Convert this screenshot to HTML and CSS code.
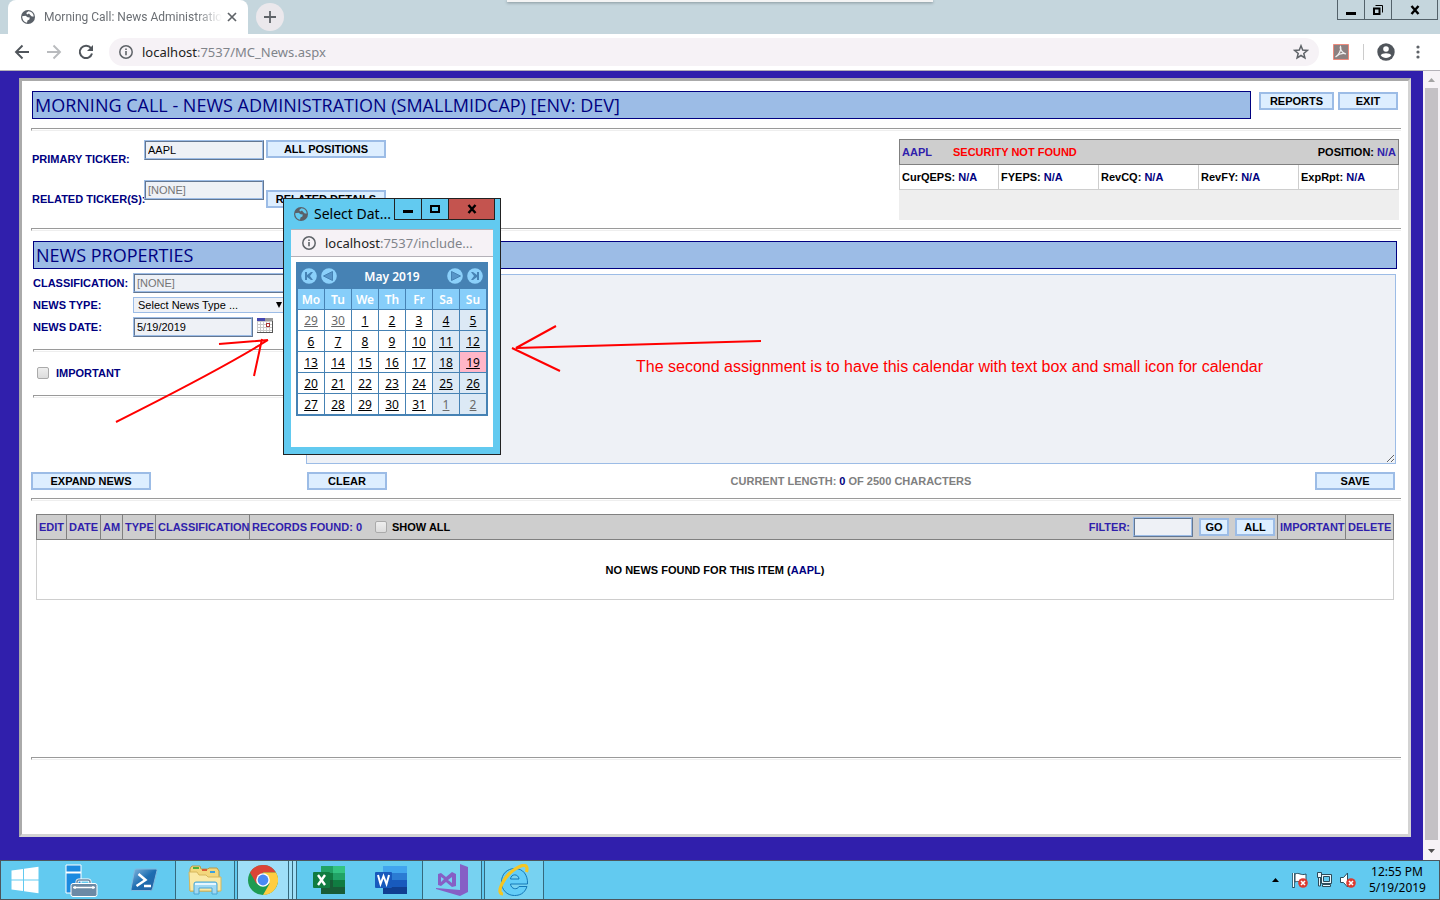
FILE: index.html
```html
<!DOCTYPE html>
<html lang="en">
<head>
<meta charset="utf-8">
<title>Morning Call: News Administration</title>
<link rel="stylesheet" href="styles.css">
</head>
<body>
<svg class="defs" aria-hidden="true">
  <symbol id="globe" viewBox="0 0 14 14"><circle cx="7" cy="7" r="7" fill="#5a6068"/><path d="M1.2 6.3 4.6 5.8 6.6 7.2 8.8 7.6 8.4 9.6 6.5 10.4 6 12.8A6 6 0 0 1 1.2 6.3ZM7.4 1.2 5.2 3 6.2 4.4 8 3.6 9.2 5 10.8 6.4 12.8 6.6A6 6 0 0 0 7.4 1.2Z" fill="currentColor"/></symbol>
  <symbol id="info" viewBox="0 0 14 14"><circle cx="7" cy="7" r="6.2" fill="none" stroke="#5f6368" stroke-width="1.5"/><path d="M7 6v4.2M7 3.6v1.5" stroke="#5f6368" stroke-width="1.6"/></symbol>
  <symbol id="denied" viewBox="0 0 10 10"><circle cx="5" cy="5" r="4.8" fill="#dc3a30"/><path d="M3 3l4 4M7 3L3 7" stroke="#fff" stroke-width="1.6"/></symbol>
</svg>

<header class="tabstrip">
  <div class="tab">
    <svg class="tab-icon" width="14" height="14"><use href="#globe"/></svg>
    <span class="tab-title">Morning Call: News Administratio</span>
    <button class="plain" aria-label="Close tab"><svg width="10" height="10" viewBox="0 0 10 10"><path d="M1 1l8 8M9 1L1 9" stroke="#5f6368" stroke-width="1.7"/></svg></button>
  </div>
  <button class="new-tab" aria-label="New tab"><svg width="12" height="12" viewBox="0 0 12 12"><path d="M6 0v12M0 6h12" stroke="#5f6368" stroke-width="1.8"/></svg></button>
  <div class="top-sliver"></div>
  <div class="window-buttons">
    <button aria-label="Minimize"><svg width="10" height="10" viewBox="0 0 10 10"><path d="M0 7h10v3H0z"/></svg></button>
    <button aria-label="Restore"><svg width="10" height="10" viewBox="0 0 10 10"><path d="M1 3.5h5.500v5.500H1z" fill="none" stroke="#000" stroke-width="2"/><path d="M2.500.5h7v7" fill="none" stroke="#000"/></svg></button>
    <button class="wide" aria-label="Close"><svg width="10" height="10" viewBox="0 0 10 10"><path d="M1.500 1l7 8M8.500 1l-7 8" stroke="#000" stroke-width="2.400"/></svg></button>
  </div>
</header>

<nav class="toolbar">
  <button class="plain" aria-label="Back"><svg width="16" height="16" viewBox="0 0 16 16" fill="none" stroke="#50555b" stroke-width="1.9"><path d="M15 8H2M8.500 1.500L2 8l6.500 6.500"/></svg></button>
  <button class="plain" aria-label="Forward"><svg width="16" height="16" viewBox="0 0 16 16" fill="none" stroke="#b9bbbe" stroke-width="1.9"><path d="M1 8h13M7.500 1.500L14 8l-6.500 6.500"/></svg></button>
  <button class="plain" aria-label="Reload"><svg width="16" height="16" viewBox="0 0 16 16"><path d="M13 4.200A6.200 6.200 0 1 0 14 9.500" fill="none" stroke="#50555b" stroke-width="2"/><path d="M15 1v6H9z" fill="#50555b"/></svg></button>
  <div class="address">
    <svg width="14" height="14"><use href="#info"/></svg>
    <span class="url"><b>localhost</b>:7537/MC_News.aspx</span>
    <svg class="star" width="16" height="16" viewBox="0 0 16 16"><path d="M8 1.800l1.700 4.300 4.600.3-3.500 3 1.100 4.500L8 11.500l-3.900 2.400 1.100-4.500-3.500-3 4.600-.3z" fill="none" stroke="#5f6368" stroke-width="1.500"/></svg>
  </div>
  <svg width="16" height="16" viewBox="0 0 16 16"><path d="M.5.5h15v15H.5z" fill="#8c8080" stroke="#ec8a7c"/><path d="M2.500 13C5 11.500 9 6 7.500 2.500 6.500 4 9 9.500 13 10c-2.500-1-7 0-10.500 3" fill="none" stroke="#eee" stroke-width="1.200"/></svg>
  <span class="tool-divider"></span>
  <svg class="avatar" width="18" height="18" viewBox="0 0 18 18"><circle cx="9" cy="9" r="8.700" fill="#50555b"/><circle cx="9" cy="6" r="2.800" fill="#fff"/><path d="M3.700 12.300c1-2.800 9.600-2.800 10.600 0-2.500 3.500-8.100 3.500-10.600 0z" fill="#fff"/></svg>
  <svg class="more" width="4" height="14" viewBox="0 0 4 14" fill="#5f6368"><circle cx="2" cy="2" r="1.600"/><circle cx="2" cy="7" r="1.600"/><circle cx="2" cy="12" r="1.600"/></svg>
</nav>

<div class="viewport">
  <main class="panel">
    <div class="title-row">
      <h1 class="banner">MORNING CALL - NEWS ADMINISTRATION (SMALLMIDCAP) [ENV: DEV]</h1>
      <button class="btn reports">REPORTS</button>
      <button class="btn exit">EXIT</button>
    </div>
    <hr>
    <section class="ticker-row">
      <div class="ticker-form">
        <label for="primary">PRIMARY TICKER:</label>
        <input id="primary" class="field" type="text" value="AAPL">
        <button class="btn">ALL POSITIONS</button>
        <label for="related">RELATED TICKER(S):</label>
        <input id="related" class="field" type="text" placeholder="[NONE]">
        <button class="btn lowered">RELATED DETAILS</button>
      </div>
      <div class="security">
        <div class="security-head"><span class="ink">AAPL</span><span class="error">SECURITY NOT FOUND</span><span class="position">POSITION: <span class="ink">N/A</span></span></div>
        <table class="security-data"><tr>
          <td>CurQEPS: <span class="navy">N/A</span></td><td>FYEPS: <span class="navy">N/A</span></td><td>RevCQ: <span class="navy">N/A</span></td><td>RevFY: <span class="navy">N/A</span></td><td>ExpRpt: <span class="navy">N/A</span></td>
        </tr></table>
      </div>
    </section>
    <hr>
    <section class="news">
      <h2 class="banner">NEWS PROPERTIES</h2>
      <div class="editor">
        <div class="properties">
          <div class="prop-grid">
            <label for="class">CLASSIFICATION:</label>
            <input id="class" class="field full" type="text" placeholder="[NONE]">
            <label for="type">NEWS TYPE:</label>
            <span class="select-wrap"><select id="type"><option>Select News Type ...</option></select></span>
            <label for="date">NEWS DATE:</label>
            <span class="date-field">
              <input id="date" class="field" type="text" value="5/19/2019">
              <button class="plain" aria-label="Choose date"><svg width="16" height="15" viewBox="0 0 16 15" shape-rendering="crispEdges"><path d="M0 0h16v15H0z" fill="#c9c9c9"/><path d="M0 0h8v3H0z" fill="#4446b0"/><path d="M8 0h8v3H8z" fill="#999"/><path d="M1 4h2v2H1zM4 4h2v2H4zM7 4h2v2H7zM10 4h2v2h-2zM13 4h2v2h-2zM1 7h2v2H1zM4 7h2v2H4zM7 7h2v2H7zM13 7h2v2h-2zM1 10h2v2H1zM4 10h2v2H4zM7 10h2v2H7zM10 10h2v2h-2zM13 10h2v2h-2zM1 13h2v1H1zM4 13h2v1H4zM7 13h2v1H7zM10 13h2v1h-2zM13 13h2v1h-2z" fill="#fff"/><path d="M9.500 5.500h3v3h-3z" fill="#fff" stroke="#a33"/><path d="M15 3h1v12H0v-1h15z" fill="#555"/></svg></button>
            </span>
          </div>
          <hr>
          <label class="important"><input type="checkbox">IMPORTANT</label>
          <hr>
        </div>
        <textarea aria-label="News text"></textarea>
      </div>
      <div class="actions">
        <button class="btn">EXPAND NEWS</button>
        <button class="btn short">CLEAR</button>
        <p class="counter">CURRENT LENGTH: <span class="navy">0</span> OF 2500 CHARACTERS</p>
        <button class="btn short">SAVE</button>
      </div>
    </section>
    <hr>
    <section class="records">
      <table class="records-table">
        <colgroup><col class="c-edit"><col class="c-date"><col class="c-am"><col class="c-type"><col class="c-class"><col><col class="c-important"><col class="c-delete"></colgroup>
        <thead><tr>
          <th>EDIT</th><th>DATE</th><th>AM</th><th>TYPE</th><th>CLASSIFICATION</th>
          <th><div class="record-tools"><span>RECORDS FOUND: 0</span><label class="show-all"><input type="checkbox">SHOW ALL</label><label class="filter" for="filter">FILTER:</label><input id="filter" class="field" type="text"><button class="btn go">GO</button><button class="btn all">ALL</button></div></th>
          <th>IMPORTANT</th><th>DELETE</th>
        </tr></thead>
        <tbody><tr><td colspan="8">NO NEWS FOUND FOR THIS ITEM (<span class="navy">AAPL</span>)</td></tr></tbody>
      </table>
    </section>
    <hr>
  </main>
  <div class="scrollbar">
    <svg width="7" height="4" viewBox="0 0 7 4"><path d="M0 4L3.500 0 7 4z" fill="#a3a3a3"/></svg>
    <div class="thumb"></div>
    <svg width="7" height="4" viewBox="0 0 7 4"><path d="M0 0l3.500 4L7 0z" fill="#505050"/></svg>
  </div>
</div>

<aside class="popup">
  <div class="popup-title">
    <svg class="popup-icon" width="14" height="14"><use href="#globe"/></svg>
    <span class="popup-name">Select Dat...</span>
    <div class="window-buttons">
      <button aria-label="Minimize popup"><svg width="10" height="10" viewBox="0 0 10 10"><path d="M0 6h10v3H0z"/></svg></button>
      <button aria-label="Maximize popup"><svg width="10" height="10" viewBox="0 0 10 10"><path d="M1 2h8v6H1z" fill="none" stroke="#000" stroke-width="2"/></svg></button>
      <button class="wide close" aria-label="Close popup"><svg width="10" height="10" viewBox="0 0 10 10"><path d="M1.500 1l7 8M8.500 1l-7 8" stroke="#000" stroke-width="2.400"/></svg></button>
    </div>
  </div>
  <div class="popup-body">
    <div class="popup-url"><svg width="14" height="14"><use href="#info"/></svg><span class="url"><b>localhost</b>:7537/include...</span></div>
    <div class="calendar">
      <div class="cal-head">
        <button class="plain" aria-label="Previous year"><svg width="16" height="16" viewBox="0 0 16 16"><circle cx="8" cy="8" r="7.800" fill="#8bd0fa"/><path d="M4 4h2v3l4-3h2l-3 4 3 4h-2L6 9v3H4z" fill="#4682b4"/></svg></button>
        <button class="plain" aria-label="Previous month"><svg width="16" height="16" viewBox="0 0 16 16"><circle cx="8" cy="8" r="7.800" fill="#8bd0fa"/><path d="M11.500 3.500v9L2.500 8z" fill="#5795c8" stroke="#4682b4"/></svg></button>
        <strong>May 2019</strong>
        <button class="plain" aria-label="Next month"><svg width="16" height="16" viewBox="0 0 16 16"><circle cx="8" cy="8" r="7.800" fill="#8bd0fa"/><path d="M4.500 3.500v9l9-4.500z" fill="#5795c8" stroke="#4682b4"/></svg></button>
        <button class="plain" aria-label="Next year"><svg width="16" height="16" viewBox="0 0 16 16"><circle cx="8" cy="8" r="7.800" fill="#8bd0fa"/><path d="M12 4h-2v3L6 4H4l3 4-3 4h2l4-3v3h2z" fill="#4682b4"/></svg></button>
      </div>
      <table>
        <thead><tr><th>Mo</th><th>Tu</th><th>We</th><th>Th</th><th>Fr</th><th>Sa</th><th>Su</th></tr></thead>
        <tbody>
          <tr><td class="other"><a href="#">29</a></td><td class="other"><a href="#">30</a></td><td><a href="#">1</a></td><td><a href="#">2</a></td><td><a href="#">3</a></td><td><a href="#">4</a></td><td><a href="#">5</a></td></tr>
          <tr><td><a href="#">6</a></td><td><a href="#">7</a></td><td><a href="#">8</a></td><td><a href="#">9</a></td><td><a href="#">10</a></td><td><a href="#">11</a></td><td><a href="#">12</a></td></tr>
          <tr><td><a href="#">13</a></td><td><a href="#">14</a></td><td><a href="#">15</a></td><td><a href="#">16</a></td><td><a href="#">17</a></td><td><a href="#">18</a></td><td class="today"><a href="#">19</a></td></tr>
          <tr><td><a href="#">20</a></td><td><a href="#">21</a></td><td><a href="#">22</a></td><td><a href="#">23</a></td><td><a href="#">24</a></td><td><a href="#">25</a></td><td><a href="#">26</a></td></tr>
          <tr><td><a href="#">27</a></td><td><a href="#">28</a></td><td><a href="#">29</a></td><td><a href="#">30</a></td><td><a href="#">31</a></td><td class="other"><a href="#">1</a></td><td class="other"><a href="#">2</a></td></tr>
        </tbody>
      </table>
    </div>
  </div>
</aside>

<svg class="arrows" width="770" height="430" viewBox="0 0 770 430" fill="none" stroke="#f00" stroke-width="2"><path d="M116 422C165 397 220 370 268 340M219 344L268 340M262 339L254 376M761 341L516 348L556 326M512 348L560 371"/></svg>
<p class="note">The second assignment is to have this calendar with text box and small icon for calendar</p>

<footer class="taskbar">
  <button class="task start" aria-label="Start"><svg width="28" height="28" viewBox="0 0 28 28" fill="#fff"><path d="M.5 4.500L12 3v10.500H.5zM13 2.800L27.500.8v12.700H13zM.5 14.500H12V25L.5 23.500zM13 14.500h14.500v12.700L13 25.200z"/></svg></button>
  <button class="task manager" aria-label="Server Manager"><svg width="33" height="33" viewBox="0 0 33 33"><path d="M1 1h15v28H1z" fill="#1b8ae0" stroke="#fff"/><path d="M1 8.500h15" stroke="#fff" stroke-width="2"/><path d="M12 20v-2q0-2 2-2h9q2 0 2 2v2" fill="none" stroke="#fff" stroke-width="3"/><path d="M12 20v-2q0-2 2-2h9q2 0 2 2v2" fill="none" stroke="#6c8aa5" stroke-width="1.500"/><rect x="6" y="19.500" width="26" height="13" rx="2" fill="#6c8aa5" stroke="#fff"/><path d="M8 23.500h22M10 22v3M28 22v3" stroke="#fff" stroke-width="1.300"/></svg></button>
  <button class="task" aria-label="PowerShell"><svg width="28" height="24" viewBox="0 0 28 24"><defs><linearGradient id="ps" x2="1" y2="1"><stop stop-color="#87b9df"/><stop offset=".5" stop-color="#1c6db1"/><stop offset="1" stop-color="#2a62a0"/></linearGradient></defs><path d="M6 1h20q1.500 0 1 1.500L22.500 21q-.5 1.500-2 1.500H2q-1.500 0-1-1.500L4.500 2.500Q5 1 6 1z" fill="url(#ps)" stroke="#7fb9df"/><path d="M8.500 6l7 6-9 6M14 18h7" fill="none" stroke="#fff" stroke-width="2.500"/></svg></button>
  <button class="task open" aria-label="File Explorer"><svg width="34" height="30" viewBox="0 0 34 30"><path d="M3 2l1-1h8l1 3h7l1-1h8l2 3v20H2V4z" fill="#f3d77c" stroke="#b69b4a"/><path d="M5 2h6v2H5z" fill="#4caf3a"/><path d="M14 4h5v2h-5z" fill="#d95c35"/><path d="M22 6h5v2h-5z" fill="#3aa0df"/><path d="M1 7h8l2 3h7l2 2h13v14H2z" fill="#fae9a6" stroke="#d6b75c"/><path d="M6 29V19q0-2 2-2h19q2 0 2 2v10h-5v-6H11v6z" fill="#9fd8f3" stroke="#4ba6d4"/><path d="M7 19h21" stroke="#e5f6ff" stroke-width="2"/></svg></button>
  <button class="task open active stacked" aria-label="Chrome"><svg width="30" height="30" viewBox="0 0 30 30"><circle cx="15" cy="15" r="15" fill="#1e9b52"/><path d="M2 7.500A15 15 0 0 1 28 7.500H15L8.500 18.700z" fill="#db4437"/><path d="M15 30A15 15 0 0 0 28 7.500H15L21.500 18.800z" fill="#ffcd40"/><circle cx="15" cy="15" r="6.800" fill="#fff"/><circle cx="15" cy="15" r="5.400" fill="#4a8af4"/></svg></button>
  <button class="task" aria-label="Excel"><svg width="32" height="28" viewBox="0 0 32 28"><path d="M8 0h12v14H8z" fill="#21a366"/><path d="M20 0h12v7H20z" fill="#33c481"/><path d="M8 7h12v7H8z" fill="#107c41"/><path d="M20 7h12v7H20z" fill="#21a366"/><path d="M8 14h24v14H8z" fill="#185c37"/><path d="M20 14h12v7H20z" fill="#107c41"/><rect y="6" width="17" height="16" rx="1" fill="#107c41"/><path d="M5 9l7 10M12 9L5 19" stroke="#fff" stroke-width="2.400"/></svg></button>
  <button class="task" aria-label="Word"><svg width="32" height="28" viewBox="0 0 32 28"><path d="M8 0h24v7H8z" fill="#41a5ee"/><path d="M8 7h24v7H8z" fill="#2b7cd3"/><path d="M8 14h24v7H8z" fill="#185abd"/><path d="M8 21h24v7H8z" fill="#103f91"/><rect y="6" width="17" height="16" rx="1" fill="#185abd"/><path d="M3 9l2.500 9L8.500 10l3 8L14 9" fill="none" stroke="#fff" stroke-width="2"/></svg></button>
  <button class="task open" aria-label="Visual Studio"><svg width="32" height="32" viewBox="0 0 32 32" fill="#865fc5"><path d="M24 0l8 3v25l-8 4L0 25v-1l24 2z"/><path d="M2 10l3-1 5 4 6-5 4 2v12l-4 1-6-5-5 4-3-1zm3 3v5l3-3zm11 0l-4 3 4 3z" fill-rule="evenodd"/></svg></button>
  <button class="task open last" aria-label="Internet Explorer"><svg width="32" height="32" viewBox="0 0 32 32"><path d="M29.500 20H12.500c.5 5.500 7 6 8.500 2.500h8C26.500 30 21 31.500 16.500 31.500 9 31.500 3.500 26 3.500 18S9 4.500 17 4.500 30 11 29.500 20zM12.500 15h8.500c-.5-5.500-8-5.500-8.500 0z" fill="#63cdf8" stroke="#1578b8" fill-rule="evenodd"/><path d="M5 30C-3 30 6 13 15 6.500S31-1 28.500 8" fill="none" stroke="#f5c623" stroke-width="3.200"/></svg></button>
  <div class="tray">
    <svg width="7" height="4" viewBox="0 0 7 4"><path d="M0 4L3.500 0 7 4z"/></svg>
    <svg width="16" height="16" viewBox="0 0 16 16"><path d="M1.500 1v15" stroke="#2c4b5a" stroke-width="2.500"/><path d="M3 2c4-2 6 2 11 0v8c-5 2-7-2-11 0z" fill="#fff" stroke="#2c4b5a"/><path d="M1.500 1v14" stroke="#fff"/><use href="#denied" x="6" y="6" width="10" height="10"/></svg>
    <svg width="16" height="16" viewBox="0 0 16 16" fill="#e8f7fd" stroke="#2c4b5a"><path d="M5.500 2.500h10v9h-10z"/><path d="M7.500 4.500h6v5h-6z" fill="#62caf0"/><path d="M6.500 14.500h8v-2h-8zM1.500.5h4v5h-4zM2.500 6v8h2V6"/></svg>
    <svg width="16" height="16" viewBox="0 0 16 16"><path d="M.5 5.500h3l4-4.500v14l-4-4.500h-3z" fill="#fff" stroke="#2c4b5a"/><use href="#denied" x="6" y="6" width="10" height="10"/></svg>
    <div class="clock"><span>12:55 PM</span><span>5/19/2019</span></div>
  </div>
</footer>
</body>
</html>
```
FILE: styles.css
```css
* { box-sizing: border-box; }
body {
  margin: 0;
  min-height: 100vh;
  display: flex;
  flex-direction: column;
  background: #301fac;
  font: bold 11px/14px "Liberation Sans", Arial, sans-serif;
  color: #000;
}
button, input, select, textarea { font: inherit; color: inherit; margin: 0; }
svg { display: block; flex: none; }
p { margin: 0; }
.defs { position: absolute; width: 0; height: 0; }
.plain { display: flex; padding: 0; border: 0; background: none; }
.navy { color: #000080; }
.ink { color: #301fac; }

.tabstrip { position: relative; height: 34px; display: flex; padding-left: 8px; background: #c5d6dd; font: 12px/16px Roboto, sans-serif; }
.tab { width: 240px; display: flex; align-items: center; padding: 0 11px 0 13px; gap: 9px; background: #fff; border-radius: 8px 8px 0 0; color: #6b6f74; }
.tab-icon { color: #fff; }
.tab-title { flex: 1; white-space: nowrap; -webkit-mask-image: linear-gradient(to right, #000 85%, transparent); mask-image: linear-gradient(to right, #000 85%, transparent); }
.tab .plain { margin-left: -4px; margin-right: 0; }
.new-tab { width: 28px; height: 28px; margin: 3px 0 0 8px; padding: 0; border: 0; border-radius: 50%; background: #ebe8ec; display: flex; align-items: center; justify-content: center; }
.top-sliver { position: absolute; top: 0; left: 507px; width: 426px; height: 2px; background: #f4f4f4; box-shadow: 0 1px 3px #7d8a90; }
.window-buttons { display: flex; margin-left: auto; height: 20px; }
.window-buttons button { width: 28px; margin-left: -1px; padding: 0; border: 1px solid #54626a; border-top: 0; background: none; display: flex; align-items: center; justify-content: center; }
.window-buttons .wide { width: 47px; }
.tabstrip .window-buttons { margin-right: 2px; }

.toolbar { height: 37px; display: flex; align-items: center; gap: 16px; padding: 0 20px 0 14px; background: #fff; border-bottom: 1px solid #b4b1b8; font: 13px/18px "Noto Sans", sans-serif; }
.address { flex: 1; height: 28px; display: flex; align-items: center; gap: 9px; padding: 0 10px; margin: 0 -2px 0 -1px; border-radius: 14px; background: #f6f2f6; }
.url { color: #80848a; }
.url b { font-weight: 400; color: #222; }
.star { margin-left: auto; }
.tool-divider { width: 1px; height: 16px; margin: 0 -3px 0 -2px; background: #ccc; }
.more { margin-left: 5px; }

.viewport { flex: 1; display: flex; }
.panel { flex: 1; margin: 7px 12px 23px 19px; padding: 10px 7px 0 9px; border: 3px solid; border-color: #aaa #d3d3d3 #d3d3d3 #aaa; background: #fff; }
.scrollbar { width: 17px; display: flex; flex-direction: column; align-items: center; gap: 6px; padding: 7px 0; background: #f6f2f6; }
.thumb { flex: 1; width: 13px; margin-bottom: 3px; background: #c4c1c5; }
hr { height: 3px; margin: 0; border: 0; border-top: 1px solid #9a9a9a; border-bottom: 1px solid #eee; border-left: 1px solid #9a9a9a; }

.banner { flex: 1; margin: 0; height: 28px; padding: 0 2px; border: 1px solid #000080; background: #9cbce6; color: #000080; font: 500 18px/26px "Open Sans", sans-serif; white-space: nowrap; }
.title-row { display: flex; align-items: flex-start; padding: 0 3px 9px 1px; }
.btn { width: 120px; height: 18px; padding: 0; border: 2px solid #9cbce6; background: #def; line-height: 14px; text-align: center; white-space: nowrap; }
.btn.reports { width: 75px; margin: 1px 4px 0 8px; }
.btn.exit { width: 60px; margin-top: 1px; }
.btn.short { width: 80px; }
.field { width: 120px; height: 20px; padding: 0 2px; border: 2px ridge #9cbce6; background: #eef1f6; font-weight: 400; }
.field::placeholder { color: #757575; opacity: 1; }

.ticker-row { display: flex; justify-content: space-between; padding: 8px 2px 8px 1px; }
.ticker-form { display: grid; grid-template-columns: 111px 120px 120px; grid-template-rows: 40px 40px; column-gap: 1px; align-items: start; padding-top: 1px; color: #000080; }
.ticker-form label { padding-top: 12px; white-space: nowrap; }
.ticker-form .field { color: #000; }
.ticker-form .btn { color: #000; margin-left: 1px; }
.ticker-form .lowered { margin-top: 10px; }
.security { width: 500px; height: 81px; background: #eee; }
.security-head { height: 26px; display: flex; align-items: center; gap: 21px; padding: 0 2px; border: 1px solid #808080; background: #cecece; }
.error { color: #f00; }
.position { margin-left: auto; }
.security-data { width: 100%; table-layout: fixed; border-spacing: 0; background: #fff; }
.security-data td { height: 25px; padding: 0 2px; border: solid #cecece; border-width: 0 1px 1px 0; white-space: nowrap; }
.security-data td:first-child { border-left-width: 1px; }

.news { padding: 10px 4px 8px 2px; color: #000080; }
.editor { display: grid; grid-template-columns: 272px 1fr; column-gap: 1px; padding: 4px 1px 0 0; }
.properties { padding-right: 4px; }
.prop-grid { display: grid; grid-template-columns: 100px 1fr; grid-template-rows: 20px 24px 20px; align-items: center; padding-bottom: 12px; }
.field.full { width: 100%; }
.select-wrap { position: relative; display: flex; }
.select-wrap::after { content: ""; position: absolute; right: 19px; top: 5px; border: 3px solid transparent; border-top: 6px solid #000; border-bottom: 0; }
select { width: 100%; height: 16px; padding: 0 4px; border: 1px solid #9cbce6; background: #eef1f6; appearance: none; font-weight: 400; line-height: 14px; color: #000; }
.date-field { display: flex; gap: 4px; align-items: flex-start; }
.date-field .plain { padding-top: 1px; }
.date-field, .prop-grid .field { color: #000; }
input[type="checkbox"] { appearance: none; width: 12px; height: 12px; border: 1px solid #aaa; border-radius: 2px; background: linear-gradient(#eee, #dcdcdc); }
.important { display: flex; align-items: center; gap: 7px; height: 43px; padding: 0 0 2px 4px; }
textarea { width: 100%; height: 190px; margin-top: 1px; padding: 2px; border: 1px solid #9cbce6; background: #eef1f6; color: #000; font-weight: 400; resize: both; }
.actions { display: flex; align-items: center; margin: 8px 2px 0 -2px; color: #808080; }
.actions .btn { color: #000; }
.actions .btn:nth-child(2) { margin-left: 156px; }
.counter { flex: 1; text-align: center; }

.records { min-height: 256px; padding: 13px 7px 0 5px; }
.records-table { width: 100%; table-layout: fixed; border-collapse: collapse; }
.records-table th { height: 25px; padding: 0 2px; border: 1px solid #808080; background: #cecece; color: #301fac; white-space: nowrap; text-align: left; }
.records-table td { height: 60px; padding: 0; border: 1px solid #cecece; text-align: center; }
.c-edit { width: 30px; }
.c-date { width: 34px; }
.c-am { width: 22px; }
.c-type { width: 33px; }
.c-class { width: 94px; }
.c-important { width: 68px; }
.c-delete { width: 48px; }
.record-tools { display: flex; align-items: center; }
.record-tools .field { width: 60px; margin: 0 6px 0 3px; }
.show-all { display: flex; align-items: center; gap: 5px; margin-left: 13px; color: #000; }
.filter { margin-left: auto; }
.record-tools .btn { color: #000; }
.btn.go { width: 30px; }
.btn.all { width: 40px; margin-left: 6px; }

.popup { position: absolute; left: 283px; top: 198px; width: 218px; height: 257px; padding: 0 7px; border: 1px solid #222; background: #62caf0; }
.popup-title { display: flex; align-items: center; height: 30px; padding-left: 3px; font: 14px/20px "Noto Sans", sans-serif; color: #62caf0; }
.popup-icon { margin-right: 6px; }
.popup-name { color: #000; white-space: nowrap; }
.popup .window-buttons { align-self: flex-start; margin-right: -2px; height: 21px; }
.popup .window-buttons button { border-color: #222; }
.popup .window-buttons .close { background: #c4544f; }
.popup-body { height: 218px; background: #fff; border-top: 1px solid #b4b1b8; }
.popup-url { height: 27px; display: flex; align-items: center; gap: 9px; padding-left: 11px; background: #f6f2f6; border-bottom: 1px solid #b4b1b8; font: 13px/18px "Noto Sans", sans-serif; }
.calendar { margin: 5px 5px 0; border: 1px solid #4682b4; background: #4682b4; font: 12px/14px "Noto Sans", sans-serif; }
.cal-head { height: 25px; display: flex; align-items: center; gap: 4px; padding: 0 4px; color: #fff; }
.cal-head strong { flex: 1; text-align: center; font-weight: 600; padding-top: 2px; }
.calendar table { width: 100%; table-layout: fixed; border-spacing: 1px; background: #4682b4; }
.calendar th { height: 20px; padding: 2px 0 0; background: #87cefa; color: #fff; font-weight: 600; }
.calendar td { height: 20px; padding: 2px 0 0; background: #fff; text-align: center; }
.calendar a { color: #000; }
.calendar td:nth-child(n+6) { background: #dce9f5; }
.calendar .other a { color: #696969; }
.calendar td.today { background: #ffb6c8; }

.arrows { position: absolute; left: 0; top: 0; pointer-events: none; }
.note { position: absolute; left: 636px; top: 357px; font: 16px/20px "Liberation Sans", Arial, sans-serif; color: #f00; white-space: nowrap; }

.taskbar { height: 40px; display: flex; background: #62caf0; border: 1px solid #4d555c; font: 12px/16px "Noto Sans", sans-serif; }
.task { width: 62px; padding: 0; border: 0; background: none; display: flex; align-items: center; justify-content: center; }
.task.start { width: 48px; }
.task.manager { width: 64px; }
.task.open { width: 60px; margin-right: 2px; border: solid #35697d; border-width: 0 1px; background: #77d2f1; }
.task.active { background: #9fdff8; }
.task.stacked { width: 52px; box-shadow: 3px 0 #9fdff8, 4px 0 #35697d, 7px 0 #9fdff8, 8px 0 #35697d; margin-right: 9px; }
.tray { margin-left: auto; display: flex; align-items: center; gap: 8px; padding-right: 14px; }
.tray > svg:first-child { margin-right: 5px; }
.clock { width: 56px; margin-left: 5px; display: flex; flex-direction: column; text-align: center; }
```
